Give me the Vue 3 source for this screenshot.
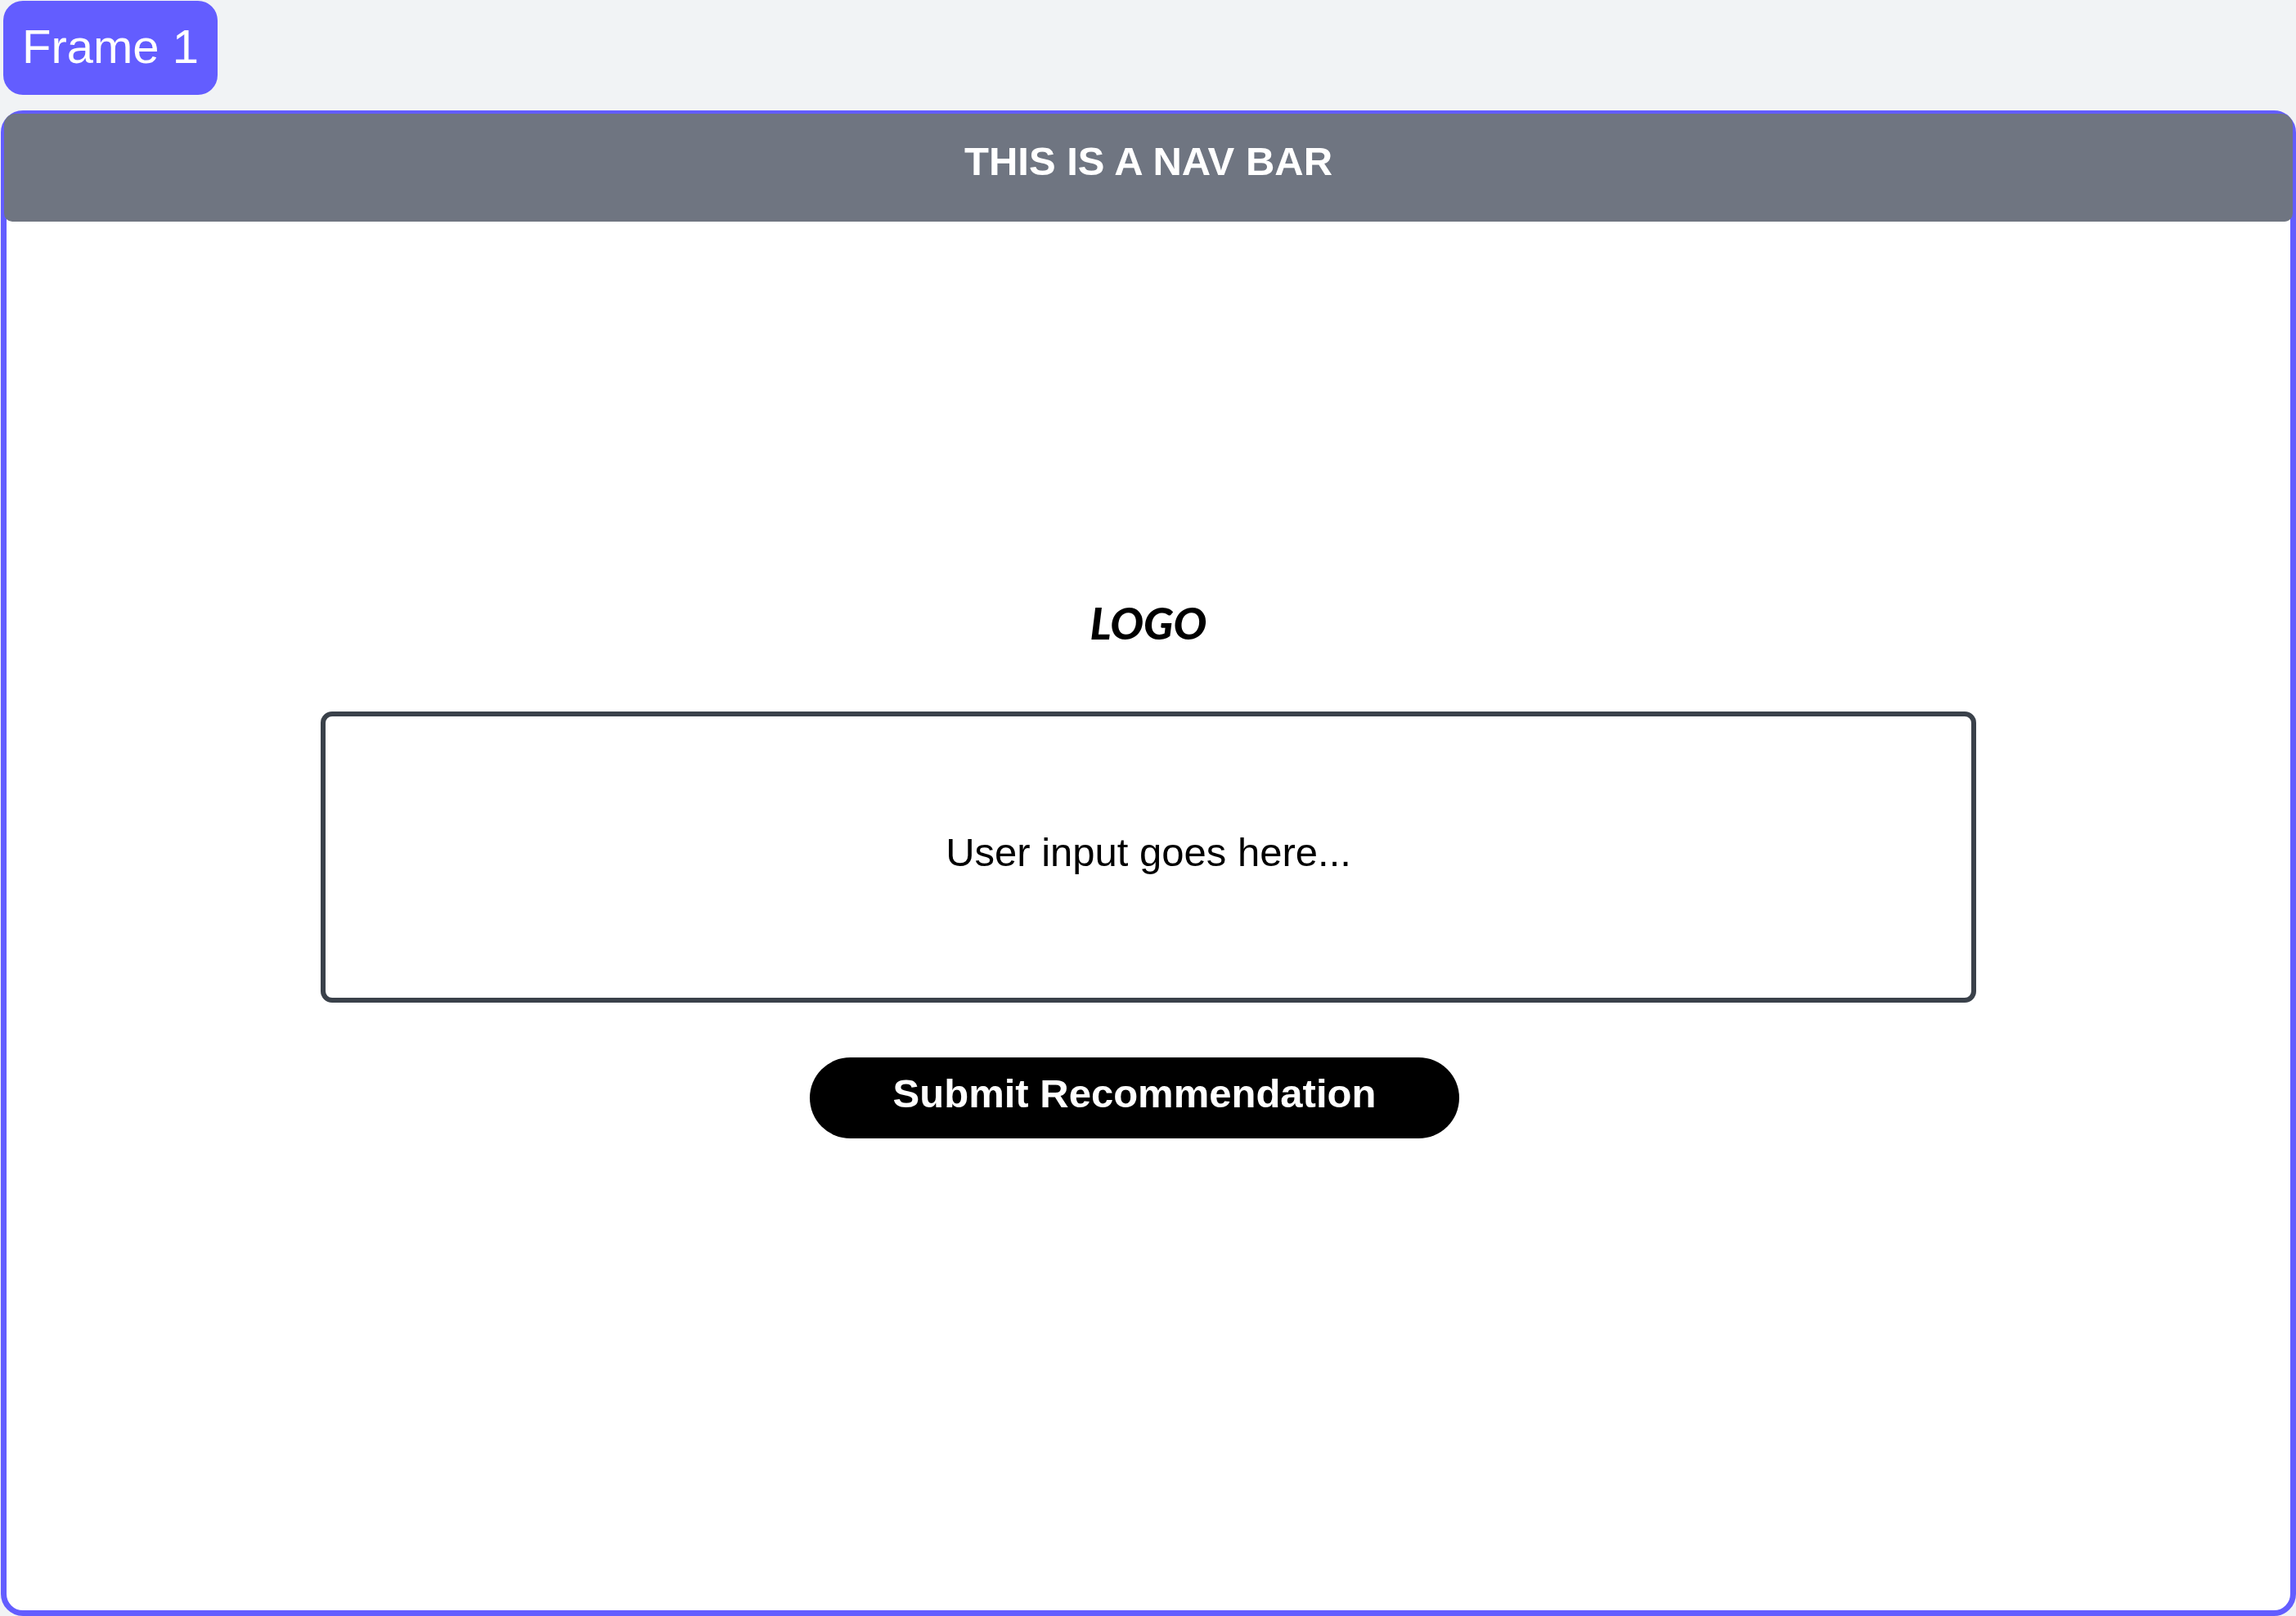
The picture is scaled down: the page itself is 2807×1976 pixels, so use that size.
<script setup>
import { ref } from 'vue'

const recommendation = ref('')
</script>

<template>
  <div class="page">
    <span class="tag">Frame 1</span>
    <div class="frame">
      <header class="nav">THIS IS A NAV BAR</header>
      <main class="content">
        <h1 class="logo">LOGO</h1>
        <form class="form" @submit.prevent>
          <input
            v-model="recommendation"
            class="field"
            type="text"
            aria-label="Recommendation"
            placeholder="User input goes here..."
          />
          <button class="submit" type="submit">Submit Recommendation</button>
        </form>
      </main>
    </div>
  </div>
</template>

<style>
body {
  margin: 0;
  background: #f1f3f5;
}
</style>

<style scoped>
.page {
  box-sizing: border-box;
  display: flex;
  flex-direction: column;
  align-items: flex-start;
  gap: 19px;
  min-height: 100vh;
  padding: 1px 0 0 1px;
  font-family: "Liberation Sans", Arial, sans-serif;
  font-size: 49px;
  line-height: 56px;
}

.tag {
  box-sizing: border-box;
  height: 115px;
  margin-left: 3px;
  padding: 0 23px;
  border-radius: 24px;
  background: #635dff;
  color: #fff;
  font-size: 58px;
  line-height: 112px;
}

.frame {
  box-sizing: border-box;
  display: flex;
  flex: 1;
  flex-direction: column;
  align-self: stretch;
  border: 7px solid #635dff;
  border-radius: 27px;
  background: #fff;
}

.nav {
  box-sizing: border-box;
  height: 132px;
  margin: -3px -3px 0;
  padding-top: 30px;
  border-radius: 14px 14px 10px 10px;
  background: #6f7581;
  color: #fff;
  font-weight: 700;
  text-align: center;
}

.content {
  display: flex;
  flex-direction: column;
  align-items: center;
  padding-top: 463px;
}

.logo {
  margin: 0 0 80px;
  color: #000;
  font-family: Lato, sans-serif;
  font-size: 54px;
  font-style: italic;
  font-weight: 900;
  line-height: 56px;
}

.form {
  display: flex;
  flex-direction: column;
  align-items: center;
  width: 100%;
  gap: 67px;
}

.field {
  box-sizing: border-box;
  width: 72.5%;
  height: 356px;
  padding: 0 0 12px;
  border: 6px solid #3a414a;
  border-radius: 14px;
  background: #fff;
  color: #000;
  font: inherit;
  text-align: center;
}

.field::placeholder {
  color: #000;
  opacity: 1;
}

.submit {
  box-sizing: border-box;
  height: 99px;
  margin-right: 34px;
  padding: 0 102px 12px;
  border: 0;
  border-radius: 50px;
  background: #000;
  color: #fff;
  font: inherit;
  font-weight: 700;
}
</style>
